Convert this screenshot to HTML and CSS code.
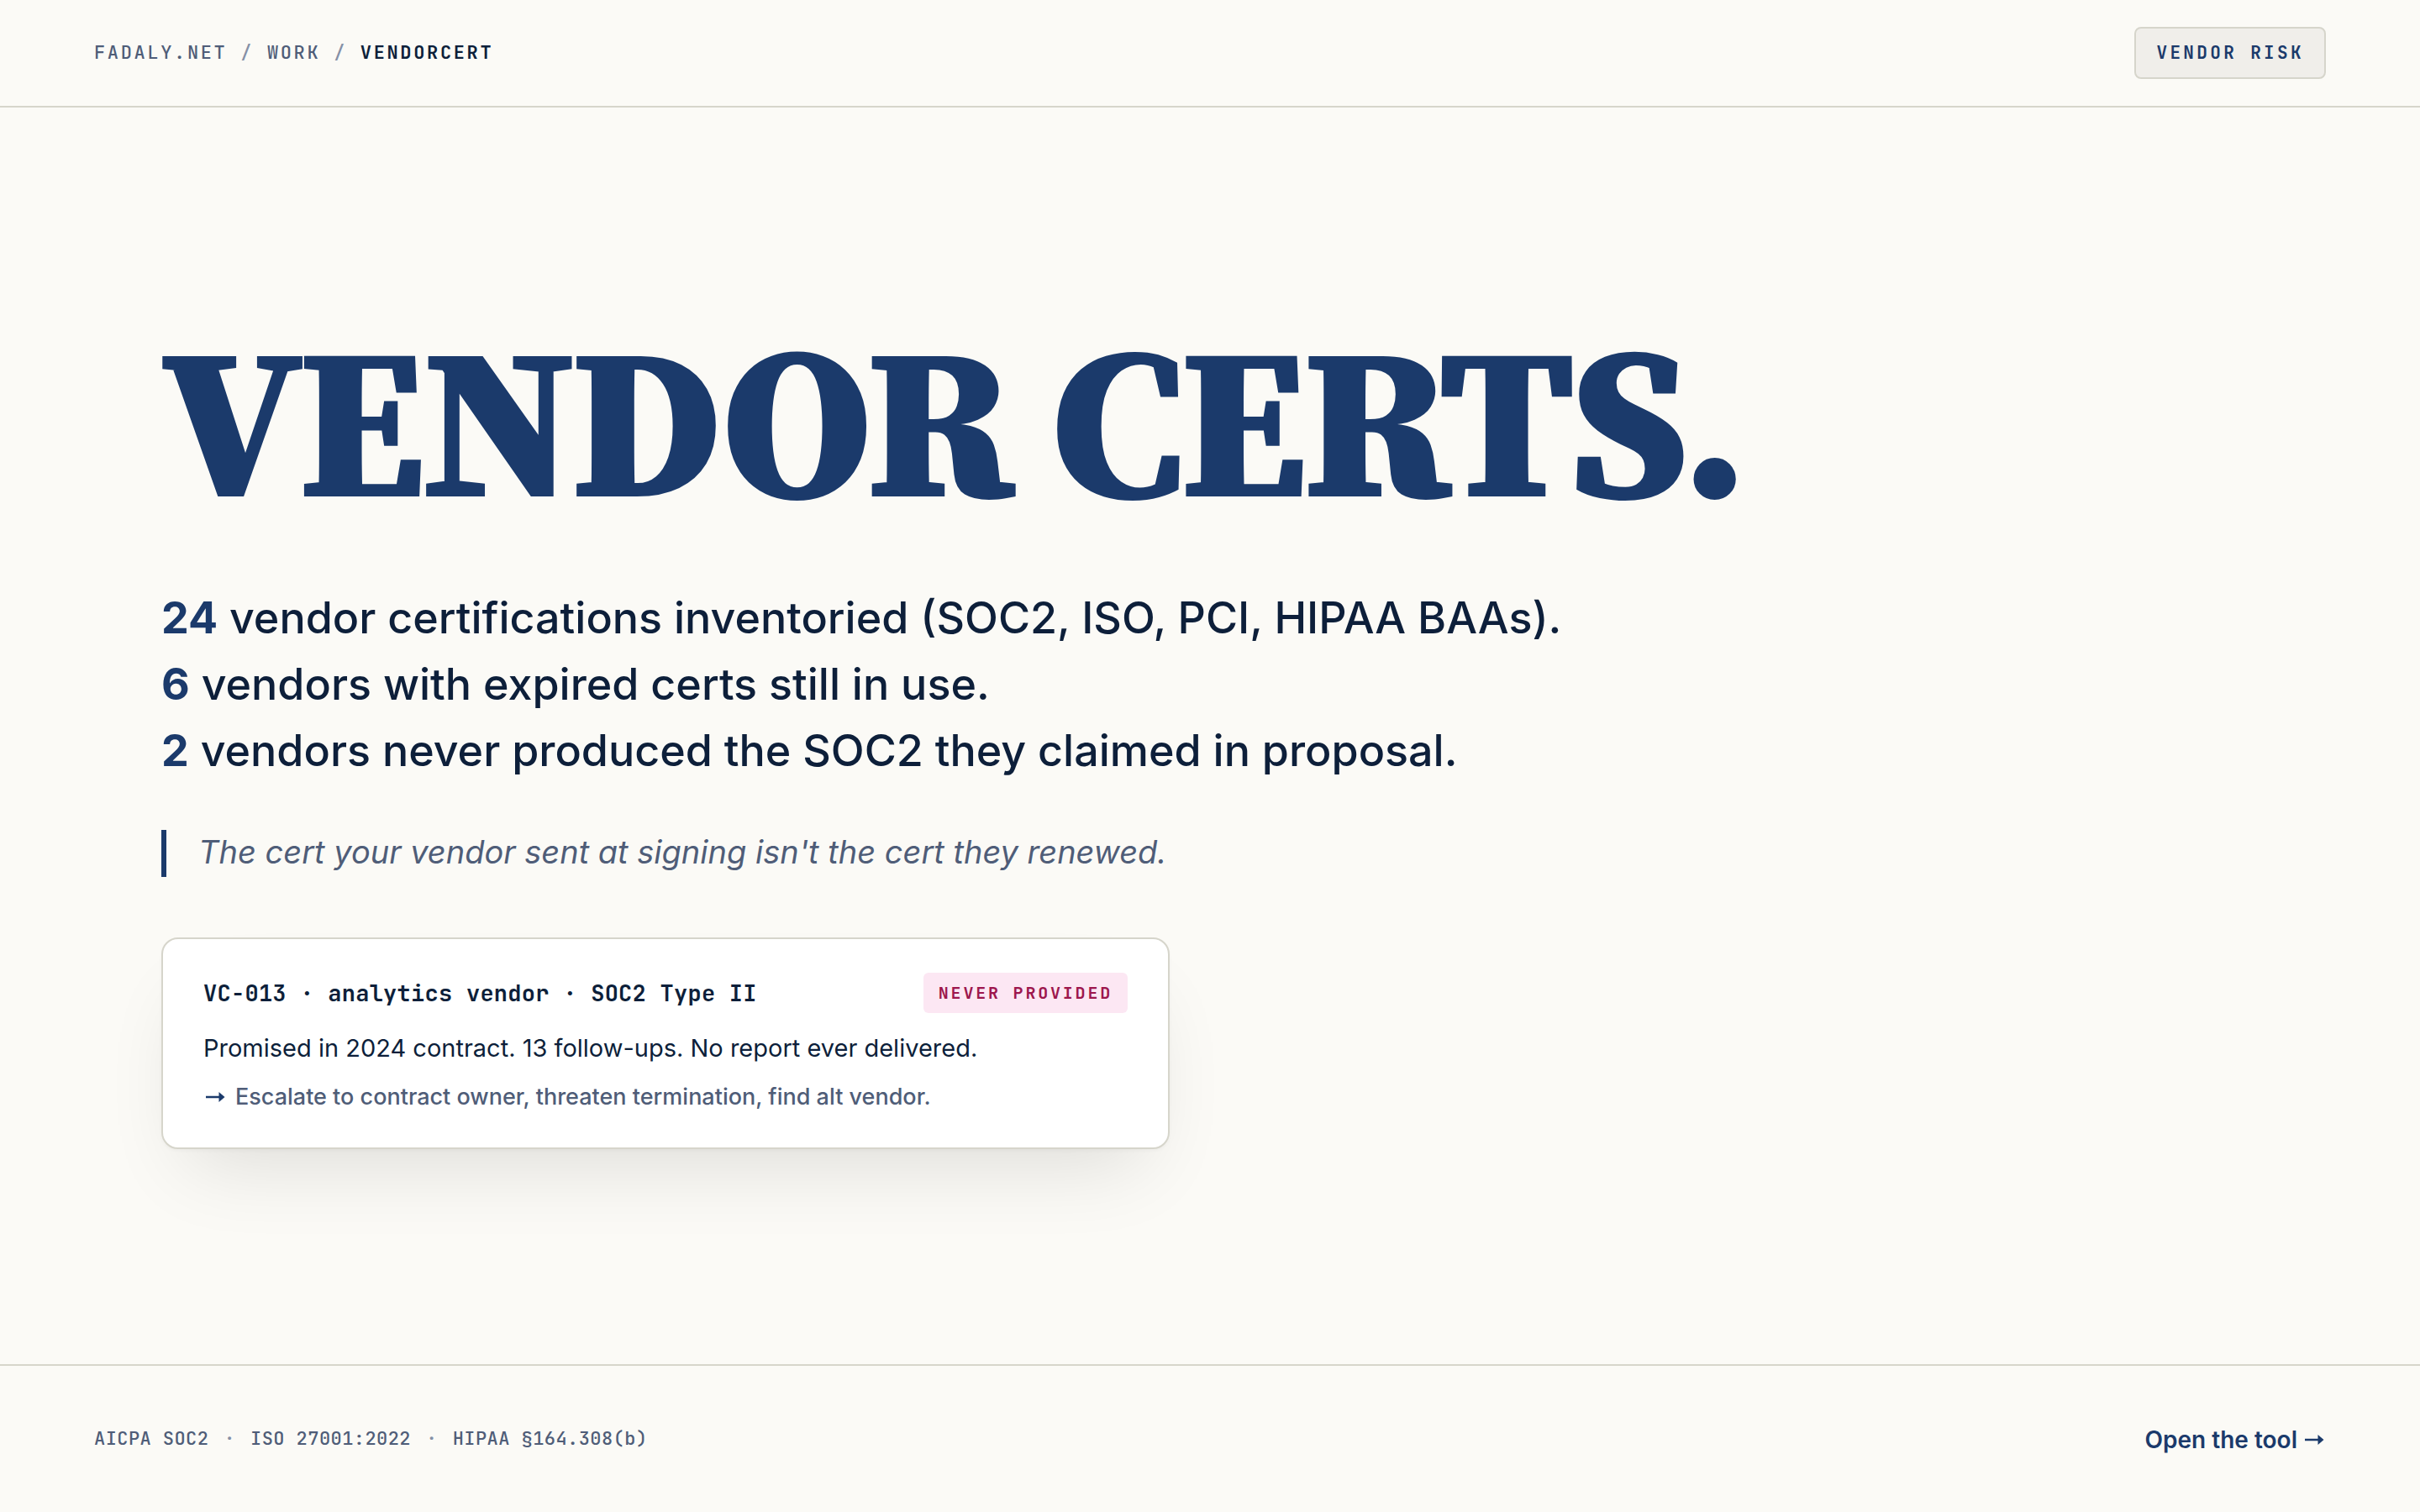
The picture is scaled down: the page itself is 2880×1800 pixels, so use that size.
FILE: index.html
```html
<!DOCTYPE html>
<html lang="en">
<head>
<meta charset="utf-8">
<meta name="viewport" content="width=device-width, initial-scale=1">
<title>Vendor Certs</title>
<link rel="stylesheet" href="styles.css">
</head>
<body>
<header class="topbar">
  <nav class="crumbs" aria-label="Breadcrumb">
    <a href="#home">FADALY.NET</a> <span class="slash">/</span> <a href="#work">WORK</a> <span class="slash">/</span> <span class="current" aria-current="page">VENDORCERT</span>
  </nav>
  <span class="tag">VENDOR RISK</span>
</header>

<main class="hero">
  <h1 class="title">VENDOR CERTS.</h1>
  <div class="claims">
    <p><strong>24</strong> vendor certifications inventoried (SOC2, ISO, PCI, HIPAA BAAs).</p>
    <p><strong>6</strong> vendors with expired certs still in use.</p>
    <p><strong>2</strong> vendors never produced the SOC2 they claimed in proposal.</p>
  </div>
  <blockquote class="quote">The cert your vendor sent at signing isn't the cert they renewed.</blockquote>
  <article class="card">
    <div class="card-head">
      <h2 class="card-id">VC-013 · analytics vendor · SOC2 Type II</h2>
      <span class="badge">NEVER PROVIDED</span>
    </div>
    <p class="card-body">Promised in 2024 contract. 13 follow-ups. No report ever delivered.</p>
    <p class="card-action">
      <svg class="arrow" viewBox="0 0 28 14" aria-hidden="true"><path d="M3 5.8H18.5V1L25.5 7L18.5 13V8.2H3Z"/></svg>
      Escalate to contract owner, threaten termination, find alt vendor.
    </p>
  </article>
</main>

<footer class="bottombar">
  <div class="standards">
    <span>AICPA SOC2</span><span class="dot">·</span><span>ISO 27001:2022</span><span class="dot">·</span><span>HIPAA §164.308(b)</span>
  </div>
  <a class="open-link" href="#tool">
    Open the tool
    <svg class="arrow" viewBox="0 0 28 14" aria-hidden="true"><path d="M3 5.8H18.5V1L25.5 7L18.5 13V8.2H3Z"/></svg>
  </a>
</footer>
</body>
</html>
```
FILE: styles.css
```css
:root {
  --paper: #fbfaf6;
  --rule: #d6d5cb;
  --navy: #1b3a6b;
  --ink: #0d1f3a;
  --muted: #4f5d78;
  --faint: #8590a6;
  --mono: "JetBrains Mono", "Liberation Mono", monospace;
  --sans: "Inter", "Liberation Sans", sans-serif;
  --serif: "Source Serif 4", "DejaVu Serif", serif;
}

* {
  box-sizing: border-box;
  margin: 0;
}

body {
  min-height: 100vh;
  display: flex;
  flex-direction: column;
  background: var(--paper);
  color: var(--ink);
  font-family: var(--sans);
}

a {
  color: inherit;
  text-decoration: none;
}

.topbar,
.bottombar {
  display: flex;
  align-items: center;
  justify-content: space-between;
  padding: 32px 112px;
}

.topbar {
  border-bottom: 2px solid var(--rule);
}

.crumbs {
  font: 500 22px/36px var(--mono);
  letter-spacing: 0.12em;
  color: var(--muted);
}

.slash {
  color: var(--faint);
}

.current {
  font-weight: 600;
  color: var(--ink);
}

.tag {
  padding: 12px 24px;
  border: 2px solid var(--rule);
  border-radius: 8px;
  background: #f0eeea;
  color: var(--navy);
  font: 600 21px/34px var(--mono);
  letter-spacing: 0.16em;
}

.hero {
  flex: 1;
  display: flex;
  flex-direction: column;
  justify-content: center;
  align-items: flex-start;
  padding: 0 192px;
}

.title {
  margin-bottom: 76px;
  color: var(--navy);
  font: 900 256px/236px var(--serif);
  letter-spacing: -0.02em;
}

.claims {
  margin-bottom: 55px;
  font-size: 52px;
  font-weight: 500;
  line-height: 79px;
}

.claims strong {
  font-weight: 700;
  color: var(--navy);
}

.quote {
  margin-bottom: 72px;
  padding: 0 0 4px 38px;
  border-left: 6px solid var(--navy);
  color: var(--muted);
  font-size: 38px;
  font-style: italic;
  line-height: 52px;
}

.card {
  width: 100%;
  max-width: 1200px;
  padding: 40px 48px;
  border: 2px solid var(--rule);
  border-radius: 20px;
  background: #fff;
  box-shadow: 0 2px 4px rgba(0, 0, 0, 0.03), 0 48px 96px -32px rgba(0, 0, 0, 0.12);
}

.card-head {
  display: flex;
  align-items: center;
  justify-content: space-between;
  margin-bottom: 20px;
}

.card-id {
  font: 600 27px/44px var(--mono);
  letter-spacing: 0.01em;
}

.badge {
  padding: 8px 18px;
  border-radius: 6px;
  background: #fce7f3;
  color: #9d174d;
  font: 600 20px/32px var(--mono);
  letter-spacing: 0.14em;
}

.card-body {
  margin-bottom: 16px;
  font-size: 29px;
  line-height: 44px;
}

.card-action {
  display: flex;
  align-items: center;
  gap: 10px;
  color: var(--muted);
  font-size: 27px;
  font-weight: 500;
  line-height: 40px;
}

.arrow {
  width: 28px;
  height: 14px;
  fill: var(--navy);
}

.bottombar {
  min-height: 176px;
  border-top: 2px solid var(--rule);
}

.standards {
  display: flex;
  gap: 18px;
  color: var(--muted);
  font: 500 22px/36px var(--mono);
  letter-spacing: 0.02em;
}

.dot {
  color: var(--faint);
}

.open-link {
  display: flex;
  align-items: center;
  gap: 6px;
  padding-top: 2px;
  color: var(--navy);
  font-size: 28px;
  font-weight: 600;
  line-height: 44px;
}
```
